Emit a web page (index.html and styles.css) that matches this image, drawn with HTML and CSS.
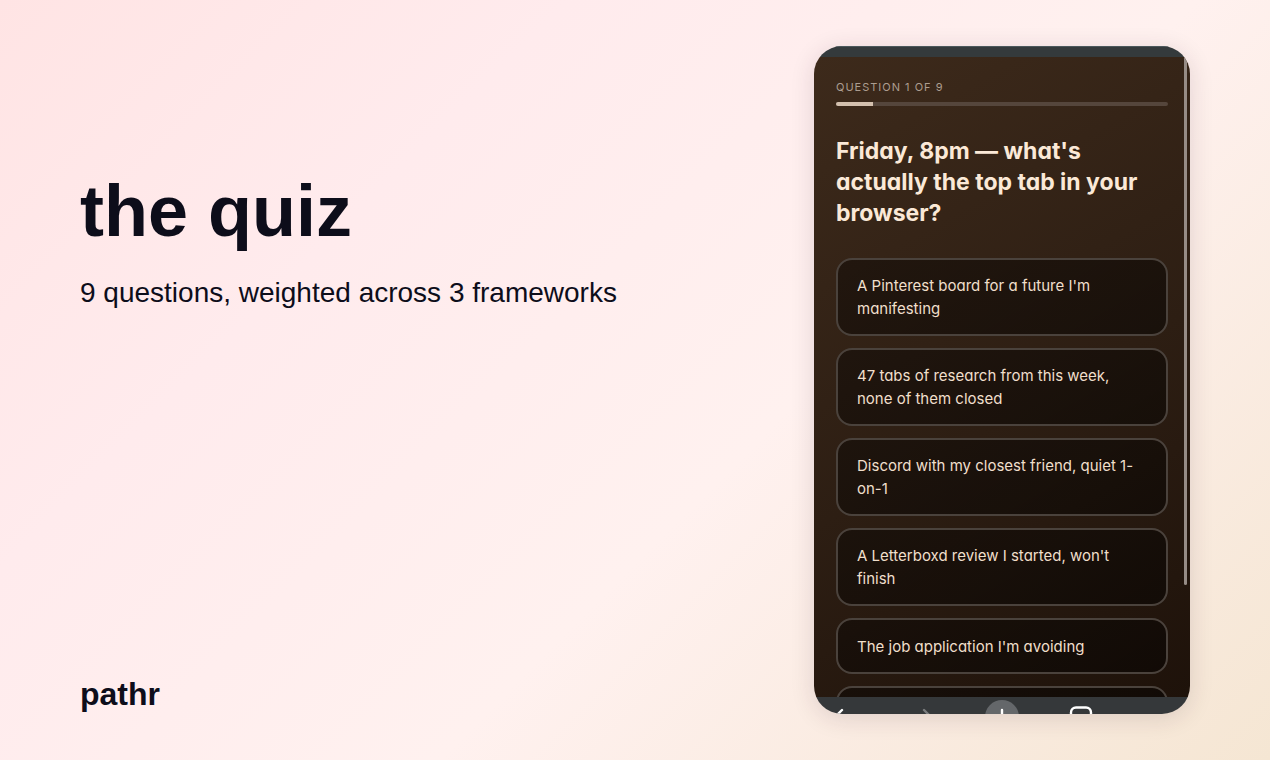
FILE: index.html
```html
<!DOCTYPE html>
<html lang="en">
	<head>
		<meta charset="UTF-8">
		<meta name="viewport" content="width=device-width, initial-scale=1">
		<title>pathr - the quiz</title>
		<link rel="stylesheet" href="styles.css">
	</head>
	<body>
		<div class="slide">
			<div class="intro">
				<div class="intro-text">
					<h1>the quiz</h1>
					<p>9 questions, weighted across 3 frameworks</p>
				</div>
				<div class="brand">pathr</div>
			</div>
			<div class="phone">
				<div class="phone-top"></div>
				<main class="screen">
					<label class="step" for="progress">QUESTION 1 OF 9</label>
					<progress class="progress" id="progress" value="1" max="9"></progress>
					<h2>Friday, 8pm — what's actually the top tab in your browser?</h2>
					<div class="answers">
						<button type="button">A Pinterest board for a future I'm manifesting</button>
						<button type="button">47 tabs of research from this week, none of them closed</button>
						<button type="button">Discord with my closest friend, quiet 1-on-1</button>
						<button type="button">A Letterboxd review I started, won't finish</button>
						<button type="button">The job application I'm avoiding</button>
						<button type="button" aria-label="Another answer"></button>
					</div>
					<div class="scrollbar"></div>
				</main>
				<nav class="toolbar">
					<button type="button" aria-label="Back">
						<svg viewBox="0 0 34 34"><path d="M17 10l-8 8 8 8"/></svg>
					</button>
					<button type="button" aria-label="Forward" class="dim">
						<svg viewBox="0 0 34 34"><path d="M19 10l8 8-8 8"/></svg>
					</button>
					<button type="button" aria-label="New tab" class="plus">
						<svg viewBox="0 0 34 34"><path d="M17 10v15M9 17h16"/></svg>
					</button>
					<button type="button" aria-label="Tabs">
						<svg viewBox="0 0 34 34"><rect x="6" y="7.5" width="20" height="20" rx="5"/></svg>
					</button>
					<button type="button" aria-label="More">
						<svg viewBox="0 0 34 34"><path d="M9 18h1M17 18h1M25 18h1"/></svg>
					</button>
				</nav>
			</div>
		</div>
	</body>
</html>
```
FILE: styles.css
```css
*{
	padding: 0;
	margin: 0;
	box-sizing: border-box;
}
body{
	font-family: "Liberation Sans", Arial, sans-serif;
	color: #0d0d1a;
}
.slide{
	display: flex;
	justify-content: space-between;
	gap: 40px;
	height: 100vh;
	padding: 46px 80px;
	background: linear-gradient(135deg, #ffe4e4 0%, #ffebed 28%, #fff1ef 59%, #f5e6d3 100%);
}
.intro{
	display: flex;
	flex-direction: column;
	justify-content: space-between;
}
.intro-text{
	padding-top: 125px;
}
.intro h1{
	font-size: 72px;
	line-height: 80px;
}
.intro p{
	margin-top: 24px;
	font-size: 28px;
	line-height: 36px;
}
.brand{
	font-size: 32px;
	line-height: 40px;
	font-weight: bold;
}
/*phone*/
.phone{
	display: flex;
	flex-direction: column;
	flex: 0 0 376px;
	border-radius: 28px;
	overflow: hidden;
	box-shadow: 0 4px 24px rgba(60, 30, 50, 0.14);
	font-family: Inter, "Liberation Sans", sans-serif;
	font-feature-settings: "cv11";
}
.phone-top{
	flex: 0 0 11px;
	background: #343a3c;
	border-top: 1px solid #4b585c;
}
.screen{
	flex: 1;
	min-height: 0;
	display: flex;
	flex-direction: column;
	position: relative;
	overflow: hidden;
	padding: 20px 22px 0;
	background: linear-gradient(150deg, #3d2a1b 0%, #2d1e13 55%, #1e120a 100%);
	color: #fbe9d7;
}
.step{
	font-size: 11px;
	line-height: 20px;
	letter-spacing: 1px;
	color: #ac9d90;
}
.progress{
	appearance: none;
	display: block;
	flex: none;
	width: 100%;
	height: 4px;
	margin-top: 5px;
	border: none;
	border-radius: 2px;
	overflow: hidden;
	background: #55463c;
}
.progress::-webkit-progress-bar{
	background: #55463c;
}
.progress::-webkit-progress-value{
	background: #d3c0ae;
}
.screen h2{
	margin-top: 30px;
	font-size: 23px;
	line-height: 31px;
	font-weight: 700;
}
.answers{
	display: flex;
	flex-direction: column;
	gap: 12px;
	margin-top: 29px;
}
.answers button{
	flex: none;
	min-height: 56px;
	padding: 14px 19px;
	border: 2px solid #4a423c;
	border-radius: 16px;
	background: linear-gradient(150deg, rgba(0, 0, 0, 0.38), rgba(0, 0, 0, 0.45));
	background-clip: padding-box;
	color: #f0dfcb;
	font-family: inherit;
	font-feature-settings: inherit;
	font-size: 15px;
	line-height: 23px;
	text-align: left;
}
.scrollbar{
	position: absolute;
	top: 0;
	right: 3px;
	width: 3px;
	height: 528px;
	border-radius: 2px;
	background: #968c86;
}
/*bottom bar*/
.toolbar{
	flex: 0 0 17px;
	display: flex;
	justify-content: space-between;
	align-items: flex-start;
	overflow: hidden;
	padding: 3px 11px 0;
	background: #35383a;
}
.toolbar button{
	width: 34px;
	height: 34px;
	border: none;
	border-radius: 50%;
	background: none;
	color: #fff;
}
.toolbar svg{
	display: block;
	width: 34px;
	height: 34px;
	fill: none;
	stroke: currentColor;
	stroke-width: 2.4;
	stroke-linecap: round;
	stroke-linejoin: round;
}
.toolbar .dim{
	color: #7b7d7f;
}
.toolbar .plus{
	background: #64676a;
}
```
